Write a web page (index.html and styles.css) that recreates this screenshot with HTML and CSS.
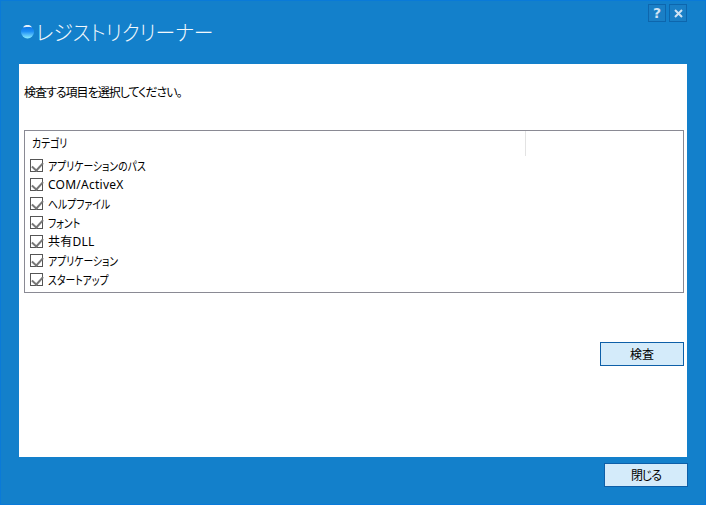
FILE: index.html
```html
<!DOCTYPE html>
<html lang="ja">
<head>
  <meta charset="UTF-8"/>
  <title>レジストリクリーナー</title>
  <link rel="stylesheet" href="styles.css">
</head>
<body>
  <div class="window">
    <!-- Title bar -->
    <div class="titlebar">
      <div class="brand">
        <svg class="orb" width="13" height="17" viewBox="0 0 13 17">
          <defs>
            <linearGradient id="orbFill" x1="0" y1="0" x2="0" y2="1">
              <stop offset="0" stop-color="#0a6fe0"/>
              <stop offset="0.45" stop-color="#1b8df5"/>
              <stop offset="1" stop-color="#8beeff"/>
            </linearGradient>
          </defs>
          <circle cx="6.5" cy="9" r="6.5" fill="url(#orbFill)"/>
          <path d="M2 4.5C3 2.6 4.6 2 6.5 2s3.500.6 4.500 2.500C9.500 3.700 3.500 3.700 2 4.500z" fill="#e3f0fa"/>
        </svg>
        <span class="app-name">レジストリクリーナー</span>
      </div>
      <div class="win-buttons">
        <button class="win-btn">?</button>
        <button class="win-btn">
          <svg width="9" height="9" viewBox="0 0 9 9"><path d="M1 1l7 7M8 1L1 8" stroke="#cfe3f4" stroke-width="2" fill="none"/></svg>
        </button>
      </div>
    </div>

    <!-- Main panel -->
    <div class="panel">
      <p class="intro">検査する項目を選択してください。</p>
      <div class="list">
        <div class="list-head"><span class="kana">カテゴリ</span></div>
        <label class="row"><input type="checkbox" checked><span class="kana">アプリケーションのパス</span></label>
        <label class="row"><input type="checkbox" checked><span class="latin">COM/ActiveX</span></label>
        <label class="row"><input type="checkbox" checked><span class="kana">ヘルプファイル</span></label>
        <label class="row"><input type="checkbox" checked><span class="kana">フォント</span></label>
        <label class="row"><input type="checkbox" checked><span class="latin">共有DLL</span></label>
        <label class="row"><input type="checkbox" checked><span class="kana">アプリケーション</span></label>
        <label class="row"><input type="checkbox" checked><span class="kana">スタートアップ</span></label>
      </div>
      <div class="scan-row"><button class="btn">検査</button></div>
    </div>

    <!-- Footer -->
    <div class="footer"><button class="btn btn-close">閉じる</button></div>
  </div>
</body>
</html>
```

FILE: styles.css
```css
* { box-sizing: border-box; margin: 0; padding: 0; }
html, body { height: 100%; }
body {
  font-family: "Noto Sans CJK JP", "Noto Sans", sans-serif;
  font-size: 12px; color: #000;
  font-feature-settings: "palt";
  overflow: hidden;
}

.window {
  width: 706px; height: 505px;
  display: flex; flex-direction: column;
  background: #1380cb;
  border: 1px solid #0a7ad8;
  padding: 0 18px;
}

/* Title bar */
.titlebar {
  flex: 0 0 63px;
  display: flex; justify-content: space-between;
}
.brand {
  display: flex; align-items: center;
  height: 60px; margin-left: 2px;
}
.orb { margin-right: 2px; }
.app-name {
  font-size: 21px; font-weight: 300;
  color: #f2f8fc;
  display: inline-block;
  transform: scaleX(0.94); transform-origin: left center;
}
.win-buttons {
  display: flex; gap: 3px;
  margin-top: 3px;
}
.win-btn {
  width: 18px; height: 18px;
  display: flex; align-items: center; justify-content: center;
  background: #1a7fc6; border: 1px solid #0d66ad;
  color: #cfe3f4; font: bold 14px "DejaVu Sans", sans-serif;
}

/* Main panel */
.panel {
  flex: 0 0 393px;
  display: flex; flex-direction: column;
  background: #fff;
  padding: 19px 3px 0 5px;
}
.intro { line-height: 18px; letter-spacing: -1px; }
.list {
  height: 163px; margin-top: 29px;
  border: 1px solid #8a8a94;
  padding: 0 5px;
}
.list-head {
  height: 25px; margin-right: 152px;
  border-right: 1px solid #e3e3e3;
  padding-left: 2px;
  line-height: 24px;
}
.row {
  display: flex; align-items: center;
  height: 19px;
}
.row input {
  appearance: none;
  width: 13px; height: 13px;
  margin-right: 5px;
  border: 1px solid #555;
  background: #fff;
  position: relative;
}
.row input::after {
  content: "";
  position: absolute; left: 3px; top: 0;
  width: 5px; height: 9px;
  transform: rotate(42deg);
  border: solid #777; border-width: 0 2px 2px 0;
}
/* kana run narrow in the original UI font */
.kana {
  display: inline-block;
  transform: scaleX(0.82); transform-origin: left center;
}
.latin {
  font-family: "Noto Sans", "Noto Sans CJK JP", sans-serif;
  letter-spacing: 0.25px;
  line-height: 18px;
}
.scan-row {
  display: flex; justify-content: flex-end;
  margin-top: 49px;
}

.btn {
  width: 84px; height: 24px;
  background: #d4ebfa;
  border: 1px solid #0d5fa8;
  padding-bottom: 2px;
  font: inherit; color: #000;
}
.btn-close { letter-spacing: -1px; }

/* Footer */
.footer {
  flex: 1;
  display: flex; justify-content: flex-end; align-items: flex-start;
  padding-top: 6px; margin-right: -1px;
}
```
